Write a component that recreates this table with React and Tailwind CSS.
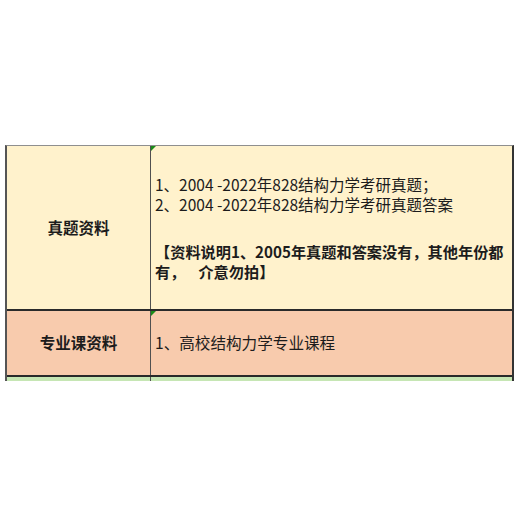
export default function App() {
  const font = { fontFamily: '"Noto Sans CJK SC", "Noto Sans", sans-serif' };
  return (
    <div className="w-[520px] h-[520px] bg-white pt-[145px] pl-[5px]" style={font}>
      <div className="w-[509px] border-t border-t-[#8f8f8f] border-l-2 border-l-[#555] border-r-2 border-r-[#333] text-[15.5px] text-[#1c1c1c]">
        <div className="grid grid-cols-[144px_1fr] h-[165px] bg-[#fff2cc] border-b-2 border-b-[#2a2a2a]">
          <div className="flex items-center justify-center font-bold border-r border-r-[#505050]">
            真题资料
          </div>
          <div className="relative flex flex-col justify-center pl-[4px] leading-[20px]">
            <span className="absolute left-0 top-0 w-0 h-0 border-t-[5px] border-t-[#1a8a1a] border-r-[5px] border-r-transparent" />
            <div>1、2004 -2022年828结构力学考研真题；</div>
            <div>2、2004 -2022年828结构力学考研真题答案</div>
            <div className="mt-[27px] font-bold text-[15.2px]">
              <div>【资料说明1、2005年真题和答案没有，其他年份都</div>
              <div>
                有，<span className="inline-block w-[13px]" />介意勿拍】
              </div>
            </div>
          </div>
        </div>
        <div className="grid grid-cols-[144px_1fr] h-[66px] bg-[#f8cbad] border-b-2 border-b-[#2a2a2a]">
          <div className="flex items-center justify-center font-bold border-r border-r-[#505050]">
            专业课资料
          </div>
          <div className="relative flex items-center pl-[4px] text-[15.6px]">
            <span className="absolute left-0 top-0 w-0 h-0 border-t-[5px] border-t-[#1a8a1a] border-r-[5px] border-r-transparent" />
            1、高校结构力学专业课程
          </div>
        </div>
        <div className="grid grid-cols-[144px_1fr] h-[4px] bg-[#c6e6b4]">
          <div className="border-r border-r-[#505050]" />
          <div />
        </div>
      </div>
    </div>
  );
}
